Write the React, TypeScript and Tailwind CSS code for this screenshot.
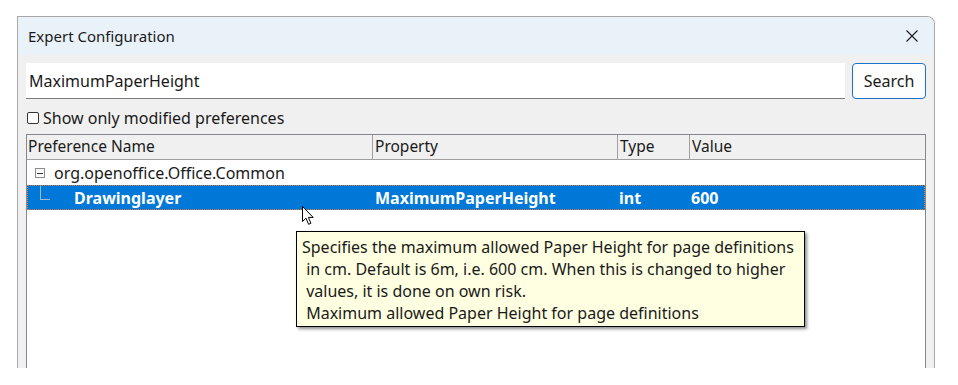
import React from 'react';

const font = "font-['Noto_Sans','Open_Sans',sans-serif]";

function CloseIcon() {
  return (
    <svg width="12" height="12" viewBox="0 0 12 12" className="block">
      <path d="M0.5 0.5 L11.5 11.5 M11.5 0.5 L0.5 11.5" stroke="#1a1a1a" strokeWidth="1.1" fill="none" />
    </svg>
  );
}

function Cursor() {
  return (
    <svg width="14" height="20" viewBox="0 0 14 20" className="block">
      <path
        d="M0.5 0.5 L0.5 15.5 L4 12.2 L6.6 18.3 L8.9 17.3 L6.4 11.4 L11.2 11.4 Z"
        fill="#ffffff"
        stroke="#000000"
        strokeWidth="1"
        strokeLinejoin="round"
      />
    </svg>
  );
}

export default function App() {
  const tooltip = [
    'Specifies the maximum allowed Paper Height for page definitions',
    '\u00a0in cm. Default is 6m, i.e. 600 cm. When this is changed to higher',
    '\u00a0values, it is done on own risk.',
    '\u00a0Maximum allowed Paper Height for page definitions',
  ];

  return (
    <div className={`relative w-[958px] h-[385px] bg-white overflow-hidden text-[#1a1a1a] ${font}`}>
      {/* Dialog window */}
      <div className="ml-[17px] mt-[16px] w-[918px] h-[352px] border border-b-0 border-[#a8a8a8] rounded-tr-[8px] overflow-hidden flex flex-col">
        {/* Title bar */}
        <div className="h-[38px] shrink-0 bg-[#eaf2f9] flex items-center justify-between pl-[10px] pr-[16px]">
          <span className="text-[15px]">Expert Configuration</span>
          <CloseIcon />
        </div>

        {/* Body */}
        <div className="flex-1 bg-[#f0f0f0] pl-[8px] pr-[8px] pt-[8px] flex flex-col">
          <div className="flex gap-[7px] items-stretch h-[36px]">
            <div className="flex-1 bg-white border-b border-[#7a7a7a] flex items-center pl-[3px] text-[16px]">
              MaximumPaperHeight
            </div>
            <button className="w-[74px] bg-[#fdfdfd] border border-[#1a73c8] rounded-[4px] text-[16px] flex items-center justify-center">
              Search
            </button>
          </div>

          <div className="flex items-center h-[20px] mt-[9px] pl-[1px]">
            <span className="w-[12px] h-[12px] border border-[#333] rounded-[2px] bg-white mr-[4px]" />
            <span className="text-[16px]">Show only modified preferences</span>
          </div>

          {/* Table */}
          <div className="mt-[6px] flex-1 border border-b-0 border-[#828790] bg-white flex flex-col">
            <div className="h-[25px] grid grid-cols-[346px_245px_72px_1fr] bg-[#f0f0f0] border-b border-[#a0a0a0] text-[15.5px]">
              <div className="border-r border-[#a0a0a0] pl-[1px] flex items-center">Preference Name</div>
              <div className="border-r border-[#a0a0a0] pl-[2px] flex items-center">Property</div>
              <div className="border-r border-[#a0a0a0] pl-[2px] flex items-center">Type</div>
              <div className="pl-[2px] flex items-center">Value</div>
            </div>

            <div className="h-[25px] flex items-center text-[16px] pt-[1px]">
              <span className="ml-[8px] w-[10px] h-[10px] border border-[#8a8a8a] flex items-center justify-center">
                <span className="w-[6px] h-[1px] bg-[#333]" />
              </span>
              <span className="ml-[9px]">org.openoffice.Office.Common</span>
            </div>

            <div className="relative h-[25px] bg-[#0078d7] outline outline-1 outline-dotted outline-[#e07a3a] -outline-offset-1 grid grid-cols-[346px_245px_72px_1fr] items-center text-white font-bold text-[16px]">
              <div className="flex items-center h-full">
                <span className="ml-[13px] mt-[-10px] w-[10px] h-[14px] border-l border-b border-[#9fb9d6]" />
                <span className="ml-[24px]">Drawinglayer</span>
              </div>
              <div className="pl-[2px]">MaximumPaperHeight</div>
              <div className="pl-[1px]">int</div>
              <div className="pl-[1px]">600</div>
            </div>
          </div>
        </div>
      </div>

      {/* Tooltip */}
      <div className="absolute left-[296px] top-[231px] w-[509px] h-[96px] bg-[#ffffe1] border border-black shadow-[2px_2px_3px_rgba(0,0,0,0.45)] pl-[5px] pt-[4px] text-[16px] leading-[22px]">
        {tooltip.map((line, i) => (
          <div key={i} className="whitespace-pre">{line}</div>
        ))}
      </div>

      {/* Mouse pointer */}
      <div className="absolute left-[302px] top-[206px]">
        <Cursor />
      </div>
    </div>
  );
}
